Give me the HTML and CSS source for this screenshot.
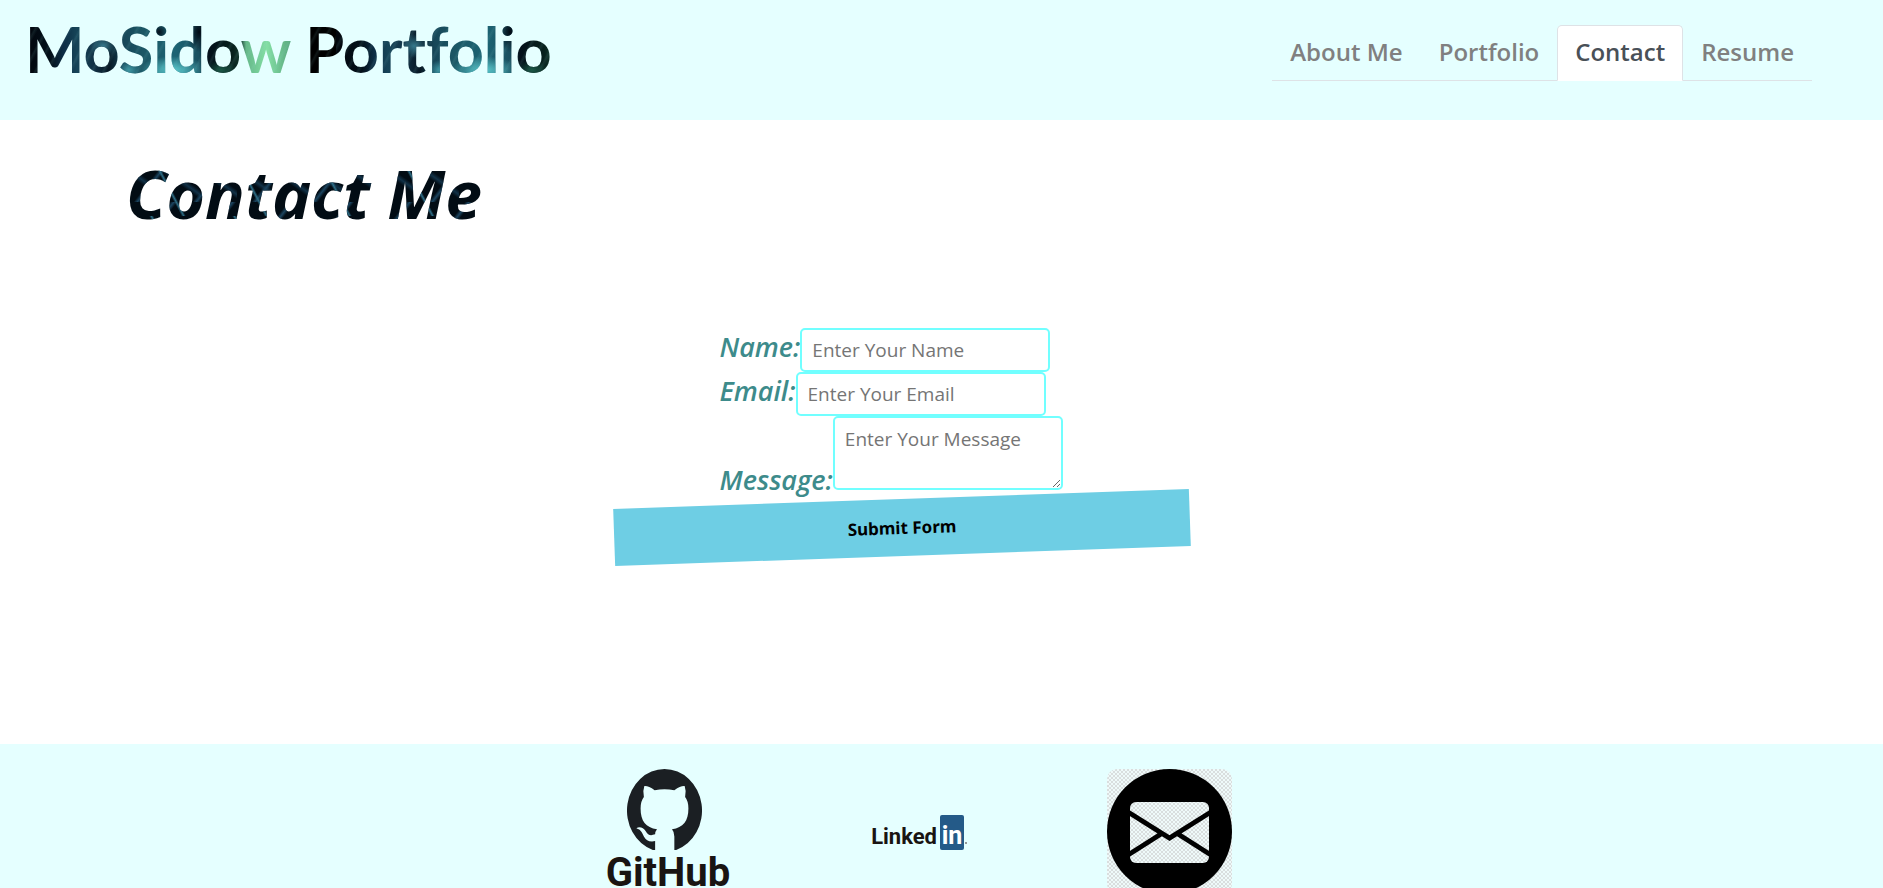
FILE: index.html
```html
<!DOCTYPE html>
<html lang="en">
<head>
<meta charset="utf-8">
<title>MoSidow Portfolio</title>
<link rel="stylesheet" href="styles.css">
</head>
<body>
<header class="site-header">
  <h1 class="brand">MoSidow Portfolio</h1>
  <nav class="tabs">
    <a class="tab" href="#about">About Me</a>
    <a class="tab" href="#portfolio">Portfolio</a>
    <a class="tab tab-active" href="#contact" aria-current="page">Contact</a>
    <a class="tab" href="#resume">Resume</a>
  </nav>
</header>
<main class="contact">
  <h2 class="contact-title">Contact Me</h2>
  <form class="contact-form">
    <div class="field">
      <label class="field-label" for="name">Name:</label>
      <input class="field-control" id="name" type="text" placeholder="Enter Your Name">
    </div>
    <div class="field">
      <label class="field-label" for="email">Email:</label>
      <input class="field-control" id="email" type="email" placeholder="Enter Your Email">
    </div>
    <div class="field-message">
      <label class="field-label" for="message">Message:</label><textarea class="field-control field-area" id="message" placeholder="Enter Your Message"></textarea>
    </div>
    <button class="submit" type="submit">Submit Form</button>
  </form>
</main>
<footer class="site-footer">
  <a class="social" href="#github" aria-label="GitHub">
    <svg class="social-icon" viewBox="0 0 125 125">
      <svg x="22" y="0" width="75" height="83" viewBox="0 0 16 16" preserveAspectRatio="none">
        <path fill="#1b1f23" d="M8 0a8 8 0 0 0-2.500 15.600h5A8 8 0 0 0 8 0z"/>
        <path fill="#e5ffff" d="M3.700 3.300Q4.500 3.200 5.900 4.100Q8 3.700 10.100 4.100Q11.500 3.200 12.300 3.300Q12.700 4.300 12.400 5.400Q13.100 6.200 13.100 7.600C13.100 10 12 11.300 9.600 11.600Q10.100 12.100 10.100 13V16H6V13.900C4.800 14.100 4.100 13.800 3.600 13C3.200 12.200 3 11.700 2 11.400C2.700 11 3.500 11.300 4 12C4.500 12.800 5 12.900 6 12.600Q6 12 6.400 11.600C4 11.300 2.900 10 2.900 7.600Q2.900 6.200 3.600 5.400Q3.300 4.300 3.700 3.300z"/>
      </svg>
      <text class="logo-word" x="63" y="117" font-size="40" text-anchor="middle">GitHub</text>
    </svg>
  </a>
  <a class="social" href="#linkedin" aria-label="LinkedIn">
    <svg class="social-icon" viewBox="0 0 125 125">
      <text class="logo-word" x="81" y="75" font-size="22" text-anchor="end">Linked</text>
      <rect x="84" y="46" width="24" height="35" rx="2" fill="#245a88"/>
      <text class="logo-in" x="96" y="75" font-size="25" text-anchor="middle">in</text>
      <circle cx="110" cy="74" r="1" fill="#777"/>
    </svg>
  </a>
  <a class="social" href="#email" aria-label="Email">
    <svg class="social-icon" viewBox="0 0 125 125">
      <defs>
        <pattern id="checks" width="4" height="4" patternUnits="userSpaceOnUse">
          <rect width="4" height="4" fill="#effafa"/>
          <path fill="#d9dede" d="M0 0h2v2H0zM2 2h2v2H2z"/>
        </pattern>
      </defs>
      <rect width="125" height="125" rx="10" fill="url(#checks)"/>
      <circle cx="62.500" cy="62.500" r="62.500"/>
      <rect x="23" y="33" width="79" height="61" rx="6" fill="url(#checks)"/>
      <path d="M21 43L62.500 69L104 43M21 86L54 65M104 86L71 65" fill="none" stroke="#000" stroke-width="5"/>
    </svg>
  </a>
</footer>
</body>
</html>
```
FILE: styles.css
```css
* { box-sizing: border-box; }
body {
  margin: 0;
  min-height: 100vh;
  overflow: hidden;
  font-family: "Noto Sans", "Open Sans", sans-serif;
  background: #fff;
}
.site-header {
  display: flex;
  justify-content: space-between;
  align-items: flex-start;
  height: 120px;
  padding: 12px 71px 0 25px;
  background: #e5ffff;
}
.brand {
  margin: 0;
  font: 700 63px/74px Lato, sans-serif;
  font-variant-ligatures: none;
  color: transparent;
  background:
    radial-gradient(ellipse 34px 14px at 148px 58px, #5cc8cc, transparent),
    radial-gradient(ellipse 12px 10px at 104px 58px, #3f98a4, transparent),
    radial-gradient(ellipse 14px 12px at 78px 34px, #37798c, transparent),
    radial-gradient(ellipse 16px 10px at 196px 58px, #1c5a48, transparent),
    radial-gradient(ellipse 9px 10px at 134px 20px, #03101c, transparent),
    radial-gradient(ellipse 12px 20px at 174px 20px, #020a14, transparent),
    repeating-linear-gradient(118deg, transparent 0 5px, rgba(150, 220, 220, .1) 7px, transparent 10px),
    linear-gradient(90deg, #02060c 0, #03101a 26px, #0c2c44 38px, #164458 52px, #123246 68px, #071824 84px, #164658 98px, #1b5664 118px, #1c6474 150px, #1a5060 174px, #04101a 184px, #07201c 208px, #12382c 216px, #65b789 221px, #84dfa4 242px, #5aa87e 266px, #000 280px, #000 311px);
  background-size: 311px 100%;
  background-clip: text;
  -webkit-background-clip: text;
}
.tabs {
  display: flex;
  margin-top: 13px;
  border-bottom: 1px solid #dee2e6;
}
.tab {
  margin-bottom: -1px;
  padding: 7px 17px 10px;
  border: 1px solid transparent;
  border-radius: 5px 5px 0 0;
  font: 600 24px/37px "Open Sans", sans-serif;
  color: gray;
  text-decoration: none;
}
.tab-active {
  color: #495057;
  background: #fff;
  border-color: #dee2e6 #dee2e6 #fff;
}
.contact {
  min-height: 624px;
  padding: 35px 206px 0 126px;
}
.contact-title {
  width: max-content;
  margin: 0;
  font: italic 700 66px/76px "Noto Sans", sans-serif;
  color: transparent;
  background:
    linear-gradient(62deg, transparent 48%, #2f6f88 50%, transparent 52%) 0 0 / 83px 61px,
    linear-gradient(128deg, transparent 46%, #1c4560 50%, transparent 54%) 0 0 / 59px 47px,
    linear-gradient(35deg, transparent 44%, #123248 50%, transparent 56%) 0 0 / 37px 53px,
    #020c14;
  background-clip: text;
  -webkit-background-clip: text;
}
.contact-form {
  display: flex;
  flex-direction: column;
  width: 364px;
  margin: 97px auto 0;
}
.field {
  display: flex;
  align-items: baseline;
}
.field-label {
  font: italic 600 27px/32px "Open Sans", sans-serif;
  color: #3d8b8b;
}
.field-control {
  width: 250px;
  height: 44px;
  padding: 8px 10px;
  border: 2px solid #71ffff;
  border-radius: 5px;
  background: #fff;
  font: 400 19px/26px "Open Sans", sans-serif;
}
.field-control::placeholder { color: #757575; opacity: 1; }
.field-area {
  width: 230px;
  height: 74px;
}
.submit {
  align-self: center;
  flex: none;
  width: 576px;
  height: 57px;
  margin-top: 3px;
  border: 0;
  background: #6ecee4;
  font: 700 17px/24px "Noto Sans", sans-serif;
  color: #000;
  transform: rotate(-2deg);
}
.site-footer {
  display: flex;
  justify-content: center;
  gap: 126px;
  padding: 25px 46px 25px 0;
  background: #e5ffff;
}
.social-icon {
  display: block;
  width: 125px;
  height: 125px;
}
.logo-word, .logo-in {
  font-family: Roboto, sans-serif;
  font-weight: 700;
  fill: #191412;
}
.logo-in { fill: #fff; }
```
